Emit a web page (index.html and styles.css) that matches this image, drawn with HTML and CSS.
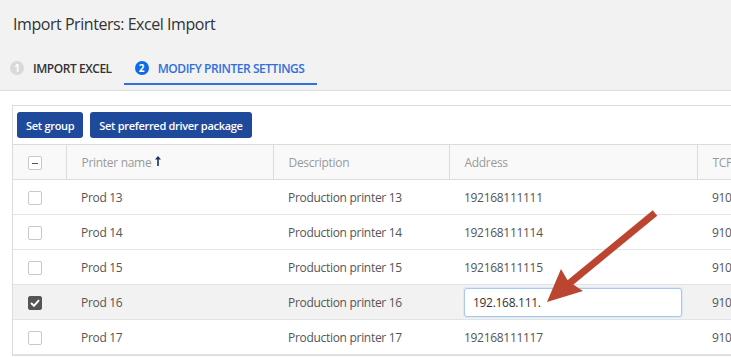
FILE: index.html
```html
<!doctype html>
<html lang="en">
<head>
  <title>Import Printers: Excel Import</title>
  <meta charset="UTF-8">
  <meta name="viewport" content="width=device-width, initial-scale=1">
  <link rel="stylesheet" href="styles.css">
</head>
<body>
  <div class="page-header">
    <h1>Import Printers: Excel Import</h1>
    <div class="steps">
      <div class="step done"><span class="num">1</span>IMPORT EXCEL</div>
      <div class="step active"><span class="num">2</span>MODIFY PRINTER SETTINGS</div>
    </div>
  </div>
  <div class="content">
    <div class="panel">
      <div class="toolbar">
        <button class="btn">Set group</button>
        <button class="btn">Set preferred driver package</button>
      </div>
      <table class="grid">
        <colgroup>
          <col class="c-check">
          <col class="c-name">
          <col class="c-desc">
          <col class="c-addr">
          <col class="c-tcp">
        </colgroup>
        <thead>
          <tr>
            <th class="check"><span class="box partial"></span></th>
            <th>Printer name <svg class="sort" width="6" height="10" viewBox="0 0 6 10"><path d="M3 0 L6 3.5 H3.8 V10 H2.2 V3.5 H0 Z" fill="#1c2f6b"/></svg></th>
            <th>Description</th>
            <th>Address</th>
            <th>TCP port</th>
          </tr>
        </thead>
        <tbody>
          <tr>
            <td class="check"><span class="box"></span></td>
            <td>Prod 13</td>
            <td>Production printer 13</td>
            <td>192168111111</td>
            <td>9100</td>
          </tr>
          <tr>
            <td class="check"><span class="box"></span></td>
            <td>Prod 14</td>
            <td>Production printer 14</td>
            <td>192168111114</td>
            <td>9100</td>
          </tr>
          <tr>
            <td class="check"><span class="box"></span></td>
            <td>Prod 15</td>
            <td>Production printer 15</td>
            <td>192168111115</td>
            <td>9100</td>
          </tr>
          <tr class="selected">
            <td class="check"><span class="box checked"><svg width="10" height="8" viewBox="0 0 10 8"><path d="M1 4 L4 6.8 L9 1.2" fill="none" stroke="#fff" stroke-width="2"/></svg></span></td>
            <td>Prod 16</td>
            <td>Production printer 16</td>
            <td class="editing"><input class="cell-input" type="text" value="192.168.111."></td>
            <td>9100</td>
          </tr>
          <tr>
            <td class="check"><span class="box"></span></td>
            <td>Prod 17</td>
            <td>Production printer 17</td>
            <td>192168111117</td>
            <td>9100</td>
          </tr>
        </tbody>
      </table>
    </div>
  </div>
  <svg class="callout" width="731" height="357" viewBox="0 0 731 357">
    <line x1="655" y1="213" x2="560" y2="291" stroke="#bb4530" stroke-width="7"/>
    <path d="M547 302 L561 269 L568 281 L583 291 Z" fill="#bb4530"/>
  </svg>
</body>
</html>
```

FILE: styles.css
```css
body {
  font-family: 'Open Sans', 'Noto Sans', Arial, sans-serif;
  margin: 0;
  background: #fff;
  color: #333;
  overflow: hidden;
  position: relative;
  height: 357px;
}
.page-header {
  background: #f2f2f2;
  border-bottom: 1px solid #dcdcdc;
  height: 91px;
  box-sizing: border-box;
  padding: 13px 0 0 0;
}
h1 {
  font-size: 16px;
  font-weight: 400;
  margin: 0 0 0 13px;
  color: #333;
  letter-spacing: -0.45px;
}
.steps {
  display: flex;
  margin-top: 16px;
  padding-left: 10px;
}
.step {
  display: flex;
  align-items: center;
  font-size: 12px;
  font-weight: 600;
  letter-spacing: -0.45px;
  height: 34px;
  box-sizing: border-box;
  color: #333;
}
.step .num {
  width: 14px;
  height: 14px;
  border-radius: 50%;
  display: inline-flex;
  align-items: center;
  justify-content: center;
  font-size: 10px;
  font-weight: 700;
  letter-spacing: 0;
  color: #fff;
  margin-right: 9px;
  background: #d9d9d9;
}
.step.done {
  margin-right: 12px;
}
.step.active {
  color: #2f6fde;
  border-bottom: 2px solid #2f6fde;
  padding: 2px 12px 0 11px;
}
.step.active .num {
  background: #0a6ce6;
}
.content {
  padding: 14px 0 0 12px;
}
.panel {
  border: 1px solid #dcdcdc;
  border-right: none;
  width: 800px;
}
.toolbar {
  display: flex;
  gap: 7px;
  padding: 6px 4px;
}
.btn {
  background: #1f4a9c;
  color: #fff;
  border: none;
  border-radius: 3px;
  height: 26px;
  padding: 0 9px;
  font-family: inherit;
  font-size: 11px;
  font-weight: 600;
  letter-spacing: -0.3px;
}
.grid {
  border-collapse: collapse;
  table-layout: fixed;
  width: 786px;
  font-size: 12px;
  letter-spacing: -0.3px;
}
.c-check { width: 53px; }
.c-name { width: 207px; }
.c-desc { width: 176px; }
.c-addr { width: 248px; }
.c-tcp { width: 102px; }
.grid th {
  background: #f9f9f9;
  color: #999;
  font-weight: 400;
  text-align: left;
  height: 34px;
  padding: 0 0 0 15px;
  border-top: 1px solid #dcdcdc;
  border-bottom: 1px solid #dcdcdc;
  border-left: 1px solid #dcdcdc;
}
.grid th:first-child {
  border-left: none;
}
.grid td {
  height: 34px;
  padding: 0 0 0 15px;
  border-bottom: 1px solid #e3e3e3;
  color: #555;
  white-space: nowrap;
  overflow: hidden;
}
.grid .check {
  padding: 0 0 0 15px;
}
.grid tr.selected td {
  background: #f2f2f2;
}
.sort {
  vertical-align: 1px;
  margin-left: 1px;
}
.box {
  display: inline-flex;
  align-items: center;
  justify-content: center;
  width: 12px;
  height: 12px;
  border: 1px solid #c8c8c8;
  border-radius: 2px;
  background: #fff;
  vertical-align: middle;
}
.box.partial::after {
  content: '';
  width: 6px;
  height: 1px;
  background: #555;
}
.box.checked {
  background: #555;
  border-color: #555;
}
.grid td.editing {
  padding-left: 15px;
}
.cell-input {
  width: 218px;
  height: 29px;
  box-sizing: border-box;
  border: 1px solid #a8c8ef;
  border-radius: 3px;
  box-shadow: 0 0 0 1px #dbe8f8;
  padding: 0 8px;
  font-family: inherit;
  font-size: 12px;
  letter-spacing: -0.3px;
  color: #333;
  outline: none;
}
.callout {
  position: absolute;
  left: 0;
  top: 0;
  pointer-events: none;
}
```
